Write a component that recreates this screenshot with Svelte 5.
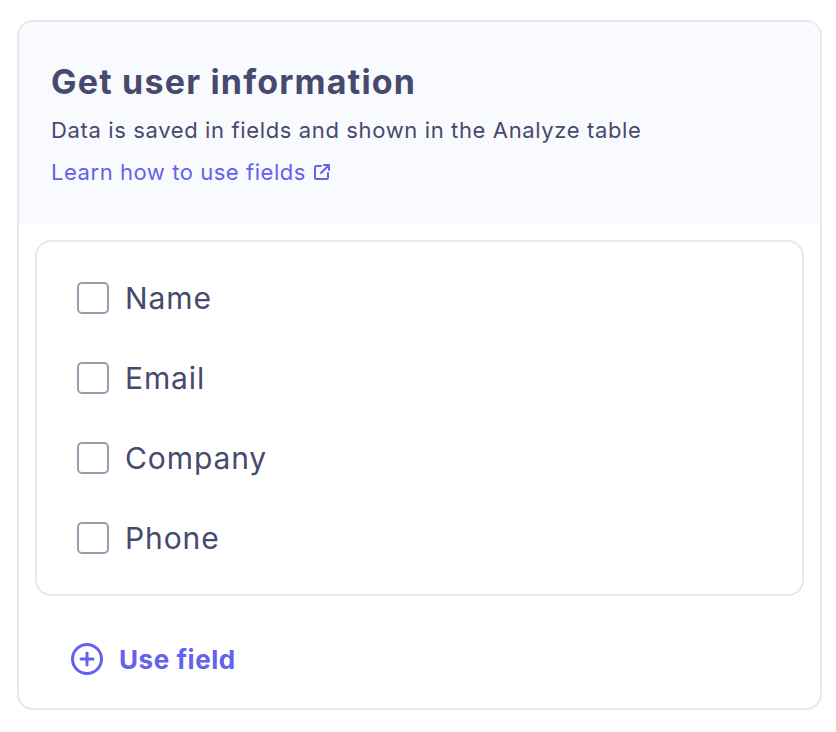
<script lang="ts">
  const fields = ['Name', 'Email', 'Company', 'Phone'];
</script>

<div class="page">
  <section class="card">
    <header class="head">
      <h1>Get user information</h1>
      <p>Data is saved in fields and shown in the Analyze table</p>
      <a href="#learn" class="learn">
        Learn how to use fields
        <svg width="18" height="18" viewBox="0 0 18 18" fill="none" stroke="currentColor" stroke-width="2" stroke-linecap="round" stroke-linejoin="round">
          <path d="M8 3H3.5A1.5 1.5 0 0 0 2 4.5v10A1.5 1.5 0 0 0 3.5 16h10a1.5 1.5 0 0 0 1.5-1.5V10" />
          <path d="M11 2h5v5M16 2L8 10" />
        </svg>
      </a>
    </header>

    <div class="fields">
      {#each fields as field}
        <label class="row">
          <input type="checkbox" />
          <span>{field}</span>
        </label>
      {/each}
    </div>

    <button class="add">
      <svg width="34" height="34" viewBox="0 0 34 34" fill="none" stroke="currentColor" stroke-width="3" stroke-linecap="round">
        <circle cx="17" cy="17" r="14.5" />
        <path d="M17 11v12M11 17h12" />
      </svg>
      Use field
    </button>
  </section>
</div>

<style>
  :global(body) {
    background: #fff;
  }

  .page {
    padding: 20px 14px 22px 17px;
    font-family: Inter, "Open Sans", sans-serif;
    color: #47496e;
  }

  .card {
    box-sizing: border-box;
    height: 690px;
    border: 2px solid #e7e8ee;
    border-radius: 16px;
    overflow: hidden;
  }

  .head {
    box-sizing: border-box;
    height: 202px;
    padding: 38px 32px 0;
    background: #f9fafe;
  }

  h1 {
    margin: 0;
    font-size: 34px;
    line-height: 44px;
    font-weight: 700;
    letter-spacing: 1.2px;
  }

  p {
    margin: 10px 0 0;
    font-size: 22px;
    line-height: 32px;
    letter-spacing: 0.63px;
  }

  .learn {
    display: inline-flex;
    align-items: center;
    gap: 7px;
    margin-top: 10px;
    font-size: 22px;
    line-height: 32px;
    letter-spacing: 0.55px;
    color: #6461ed;
    text-decoration: none;
  }

  .fields {
    box-sizing: border-box;
    height: 356px;
    margin: 16px 16px 0;
    padding: 16px 40px;
    border: 2px solid #e7e8ee;
    border-radius: 16px;
  }

  .row {
    display: flex;
    align-items: center;
    gap: 16px;
    height: 80px;
    font-size: 30px;
    letter-spacing: 0.9px;
  }

  input {
    appearance: none;
    box-sizing: border-box;
    width: 32px;
    height: 32px;
    margin: 0;
    border: 2px solid #9a9db0;
    border-radius: 5px;
    background: #fff;
  }

  .add {
    display: flex;
    align-items: center;
    gap: 15px;
    margin: 46px 0 0 51px;
    padding: 0;
    border: 0;
    background: none;
    font: inherit;
    font-size: 26px;
    font-weight: 700;
    letter-spacing: 0.55px;
    color: #6461ed;
  }
</style>
